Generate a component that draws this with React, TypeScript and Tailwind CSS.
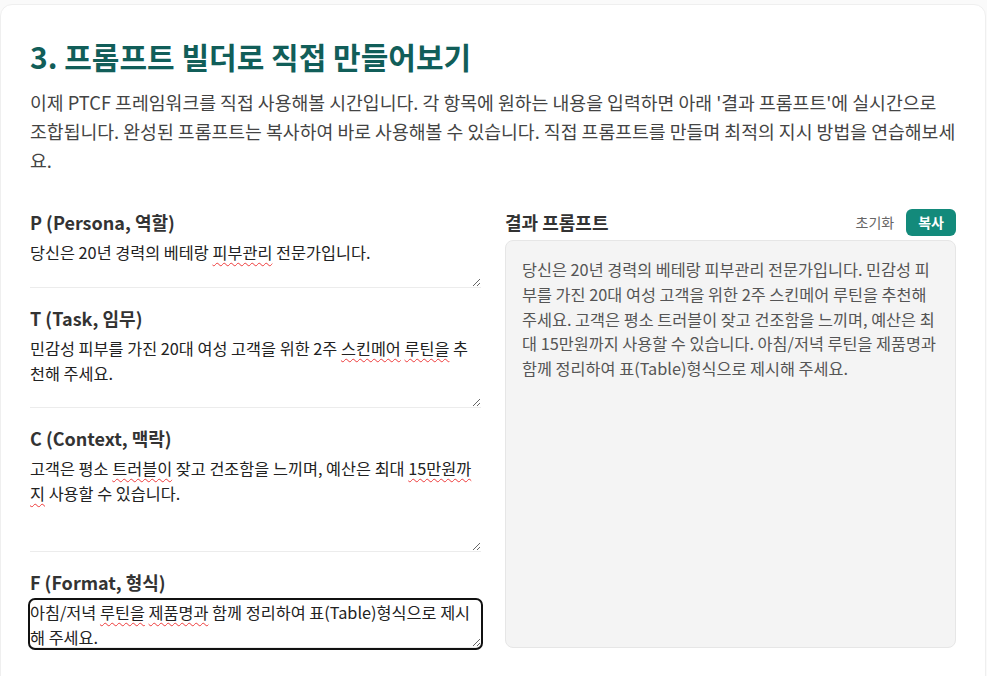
import React from "react";

const font = { fontFamily: "'Noto Sans CJK KR', 'Noto Sans', sans-serif" };

type Part = string | { u: string };

const fields: { label: string; parts: Part[]; h: string; focus?: boolean }[] = [
  { label: "P (Persona, 역할)", parts: ["당신은 20년 경력의 베테랑 ", { u: "피부관리" }, " 전문가입니다."], h: "h-[48px]" },
  { label: "T (Task, 임무)", parts: ["민감성 피부를 가진 20대 여성 고객을 위한 2주 ", { u: "스킨메어" }, " ", { u: "루틴을" }, " 추", "천해 주세요."], h: "h-[72px]" },
  { label: "C (Context, 맥락)", parts: ["고객은 평소 ", { u: "트러블이" }, " 잦고 건조함을 느끼며, 예산은 최대 ", { u: "15만원까" }, { u: "지" }, " 사용할 수 있습니다."], h: "h-[96px]" },
  { label: "F (Format, 형식)", parts: ["아침/저녁 ", { u: "루틴을" }, " ", { u: "제품명과" }, " 함께 정리하여 표(Table)형식으로 제시", "해 주세요."], h: "h-[48px]", focus: true },
];

export default function App() {
  return (
    <div className="min-h-screen bg-[#fafafa] pt-1" style={font}>
      <div className="w-[986px] bg-white rounded-xl border border-[#efefef] px-[29px] pt-[32px] pb-10">
        <h2 className="text-[30px] font-bold leading-[38px] text-[#115e59]">3. 프롬프트 빌더로 직접 만들어보기</h2>
        <p className="mt-[13px] text-[18.3px] leading-[29px] text-[#444]">
          이제 PTCF 프레임워크를 직접 사용해볼 시간입니다. 각 항목에 원하는 내용을 입력하면 아래 '결과 프롬프트'에 실시간으로 조합됩니다. 완성된 프롬프트는 복사하여 바로 사용해볼 수 있습니다. 직접 프롬프트를 만들며 최적의 지시 방법을 연습해보세요.
        </p>
        <div className="mt-[34px] grid grid-cols-2 gap-6">
          <div className="flex flex-col gap-[17px]">
            {fields.map((f) => (
              <div key={f.label} className="flex flex-col">
                <label className="text-[18px] font-bold leading-[27px] text-[#333]">{f.label}</label>
                <div
                  className={`mt-1 ${f.h} w-full resize-y overflow-auto whitespace-pre-wrap break-words border-b border-[#ececec] text-[16.3px] leading-[24.5px] text-[#222] ${
                    f.focus ? "rounded-[5px] outline-2 outline-[#111]" : ""
                  }`}
                >
                  {f.parts.map((p, i) =>
                    typeof p === "string" ? (
                      <span key={i}>{p}</span>
                    ) : (
                      <span key={i} className="underline decoration-wavy decoration-[#ee3b3b] decoration-1 underline-offset-[3px]">
                        {p.u}
                      </span>
                    )
                  )}
                </div>
              </div>
            ))}
          </div>
          <div className="flex flex-col">
            <div className="flex h-[27px] items-center justify-between">
              <span className="text-[18px] font-bold text-[#333]">결과 프롬프트</span>
              <div className="flex items-center gap-3">
                <button className="text-[14px] text-[#666]">초기화</button>
                <button className="flex h-[27px] items-center rounded-md bg-[#138a7b] px-3 text-[14px] font-bold text-white">복사</button>
              </div>
            </div>
            <div className="mt-1 flex-1 rounded-lg border border-[#e6e6e6] bg-[#f4f4f4] p-4 text-[16.3px] leading-[24.75px] text-[#555]">
              당신은 20년 경력의 베테랑 피부관리 전문가입니다. 민감성 피부를 가진 20대 여성 고객을 위한 2주 스킨메어 루틴을 추천해 주세요. 고객은 평소 트러블이 잦고 건조함을 느끼며, 예산은 최대 15만원까지 사용할 수 있습니다. 아침/저녁 루틴을 제품명과 함께 정리하여 표(Table)형식으로 제시해 주세요.
            </div>
          </div>
        </div>
      </div>
    </div>
  );
}
